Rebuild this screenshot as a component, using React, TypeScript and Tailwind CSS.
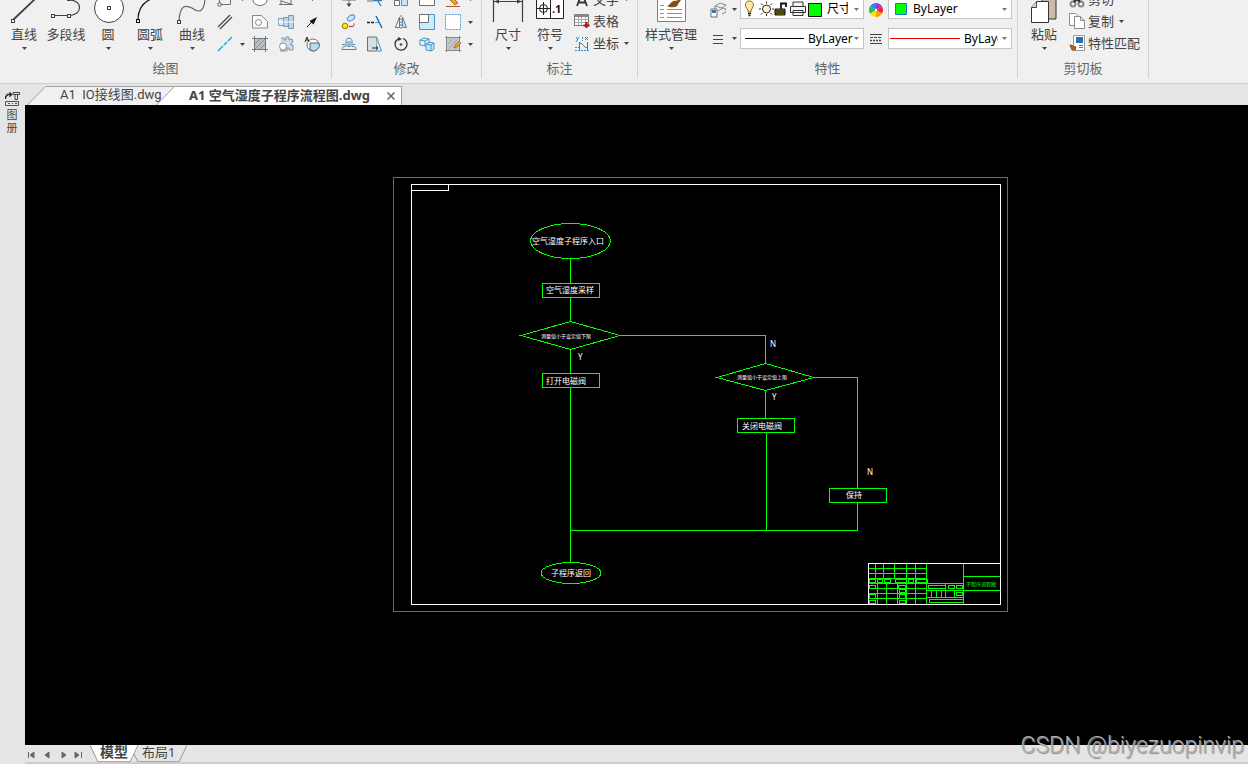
import { useState } from "react";
import type { ReactNode } from "react";

type IconProps = { children: ReactNode; short?: boolean };

// 16px toolbar icon; "short" keeps only the lower half for the scrolled row
function Icon({ children, short = false }: IconProps) {
  return (
    <svg
      viewBox={short ? "0 8 16 8" : "0 0 16 16"}
      className={short ? "w-4 h-2 block" : "w-4 h-4 block"}
      fill="none"
      stroke="#6b7075"
      strokeWidth="1"
      aria-hidden="true"
    >
      {children}
    </svg>
  );
}

function Caret({ light = false }: { light?: boolean }) {
  return (
    <svg viewBox="0 0 5 3" className="w-[5px] h-[3px] block" fill={light ? "#777" : "#444"} aria-hidden="true">
      <path d="M0 0h5L2.5 3z" />
    </svg>
  );
}

function IconButton({ label, children }: { label: string; children: ReactNode }) {
  return (
    <button type="button" aria-label={label} className="flex items-center justify-center">
      {children}
    </button>
  );
}

function BigButton({ label, caret = true, wide = false, children }: { label: string; caret?: boolean; wide?: boolean; children: ReactNode }) {
  return (
    <button type="button" className={`flex flex-col items-center ${wide ? "w-[66px]" : "w-[42px]"}`}>
      <svg viewBox="0 0 40 24" className="w-10 h-6 block" fill="none" stroke="#3d4045" aria-hidden="true">
        {children}
      </svg>
      <span className="text-[13px] leading-5 whitespace-nowrap">{label}</span>
      <span className="h-2 flex items-center">{caret && <Caret />}</span>
    </button>
  );
}

function Group({ title, className, inset = "", children }: { title: string; className: string; inset?: string; children: ReactNode }) {
  return (
    <section className={`flex flex-col border-r border-[#d2d2d2] mb-1 shrink-0 ${className}`}>
      <div className={`flex h-[58px] ${inset}`}>{children}</div>
      <h2 className="text-[13px] leading-5 text-center text-[#666]">{title}</h2>
    </section>
  );
}

function SmallButton({ label, caret = false, clipped = false, children }: { label: string; caret?: boolean; clipped?: boolean; children: ReactNode }) {
  return (
    <button
      type="button"
      className={`flex gap-[3px] overflow-hidden text-[13px] leading-[22px] whitespace-nowrap ${clipped ? "h-2.5 items-end" : "h-[22px] items-center"}`}
    >
      {clipped ? <span className="self-start">{children}</span> : children}
      <span>{label}</span>
      {caret && <span className={clipped ? "self-start pl-0.5 -mt-0.5" : "pl-0.5"}><Caret /></span>}
    </button>
  );
}

const HANDLE = { fill: "#f0f0f0", stroke: "#3d4045" };

function DrawGroup() {
  return (
    <Group title="绘图" className="w-[332px]" inset="pl-[3px]">
      <BigButton label="直线">
        <path d="M9 20L31-1" strokeWidth="1.8" />
        <rect x="7.5" y="19.5" width="3" height="3" {...HANDLE} />
      </BigButton>
      <BigButton label="多段线" caret={false}>
        <path d="M7 15.500h15c15 0 15-15 2-15.500" strokeWidth="1.200" />
        <rect x="5.500" y="14.500" width="3" height="3" {...HANDLE} />
        <rect x="21.500" y="14.500" width="3" height="3" {...HANDLE} />
        <rect x="21.500" y="-2.500" width="3" height="3" {...HANDLE} />
      </BigButton>
      <BigButton label="圆">
        <circle cx="21" cy="8" r="14.500" fill="#fff" />
        <rect x="19.500" y="6.500" width="3" height="3" {...HANDLE} />
      </BigButton>
      <BigButton label="圆弧">
        <path d="M8 20C8 11 12 3 21-1" stroke="#111" strokeWidth="1.300" />
        <rect x="6.500" y="19.500" width="3" height="3" {...HANDLE} stroke="#111" />
      </BigButton>
      <BigButton label="曲线">
        <path d="M7 21C8 4 14 5 20 8C28 14 32 11 33-1" strokeWidth="1.200" stroke="#666" />
        <rect x="5.500" y="20.500" width="3" height="3" {...HANDLE} />
      </BigButton>
      <div className="grid grid-cols-[16px_19px_26px_26px_16px] grid-rows-[8px_16px_16px] gap-y-1.5 justify-items-start pl-1">
        <IconButton label="矩形">
          <Icon short><path d="M2.500 6v6.500h11V6" /><path d="M1 11h3v3H1z" fill="#fff" /></Icon>
        </IconButton>
        <span className="justify-self-center -mt-0.5"><Caret /></span>
        <IconButton label="椭圆">
          <Icon short><ellipse cx="8" cy="8" rx="7" ry="5.500" fill="#fff" /></Icon>
        </IconButton>
        <IconButton label="多边形">
          <Icon short><path d="M3 6v7M13 6v7M1 12.500h14M3 9l10 3" /></Icon>
        </IconButton>
        <span className="w-4 flex justify-center -mt-0.5"><Caret /></span>

        <IconButton label="双线">
          <Icon><path d="M1 13L13 1M3 15L15 3" stroke="#44484c" strokeWidth="1.300" /></Icon>
        </IconButton>
        <span />
        <IconButton label="面域">
          <Icon><path d="M.500 1.500h9l6 6v6.500H.500z" fill="#fafafa" stroke="#85898d" /><circle cx="6.500" cy="8.500" r="3" stroke="#85898d" /></Icon>
        </IconButton>
        <IconButton label="轴">
          <Icon>
            <path d="M.5 4.500h5v7h-5z" fill="#d9eaf8" stroke="#7f98b0" />
            <path d="M5.500 3.500h5v9h-5zM10.500 1.500h5v13h-5z" fill="#b9d4ec" stroke="#7f98b0" />
            <path d="M0 8h16" stroke="#fff" />
          </Icon>
        </IconButton>
        <IconButton label="箭头">
          <Icon><path d="M3 13l5-5" stroke="#111" /><path d="M13 3L5.500 7l4 3.500z" fill="#111" stroke="none" /></Icon>
        </IconButton>

        <IconButton label="构造线">
          <Icon><path d="M1 15l5-5M7 9l3-3M11 5l4-4" stroke="#2ea3dc" strokeWidth="1.500" /></Icon>
        </IconButton>
        <span className="self-center justify-self-center"><Caret /></span>
        <IconButton label="填充">
          <Icon>
            <path d="M2.500 2.500h11v11h-11z" fill="#b9bec2" />
            <path d="M2.500 0v16M13.500 0v16M0 2.500h16M0 13.500h16" stroke="#74797d" />
            <path d="M3 8l5-5M3 13L13 3M8 13l5-5" stroke="#8a9095" />
          </Icon>
        </IconButton>
        <IconButton label="齿轮">
          <Icon>
            <path d="M3 2h3v2h2V1h3v3l3-1 1 3-2 1v2h2v5h-4v-2H9v3H2" fill="#cfdcea" stroke="#8492a3" />
            <circle cx="5" cy="10.500" r="3.500" fill="#fff" stroke="#8492a3" />
          </Icon>
        </IconButton>
        <IconButton label="局部视图">
          <Icon>
            <circle cx="9" cy="9" r="6" fill="#fff" />
            <path d="M6 7h9a6 6 0 0 1-9 7z" fill="#b5dcf5" stroke="#5f6468" />
            <path d="M1 6l2-5 2 5M2 4h2" stroke="#222" />
          </Icon>
        </IconButton>
      </div>
    </Group>
  );
}

function ModifyGroup() {
  return (
    <Group title="修改" className="w-[150px]" inset="pl-[9px]">
      <div className="grid grid-cols-[26px_26px_26px_26px_16px_19px] grid-rows-[8px_16px_16px] gap-y-1.5 justify-items-start">
        <IconButton label="移动">
          <Icon short><path d="M1 8h14M8 8v6" /><path d="M5.500 11.500h5L8 15z" fill="#444" stroke="none" /></Icon>
        </IconButton>
        <IconButton label="修剪">
          <Icon short><path d="M0 9h6" /><path d="M6 8.500h9M9 6l5 8" stroke="#2e7fc4" strokeWidth="1.300" /></Icon>
        </IconButton>
        <IconButton label="阵列">
          <Icon short><path d="M1.500 8.500h5v5h-5z" fill="#fff" /><path d="M8.500 4.500h6v9h-6z" fill="#c6e6fa" stroke="#4b94ca" /></Icon>
        </IconButton>
        <IconButton label="拉伸">
          <Icon short><path d="M.500 2.500h15v11H.500z" fill="#fff" /></Icon>
        </IconButton>
        <IconButton label="删除">
          <Icon short><path d="M4 7l6 6 3-2-7-7z" fill="#f0a02e" stroke="#b86a16" /><path d="M1 14.500h14" stroke="#a05c2c" /></Icon>
        </IconButton>
        <span className="justify-self-center -mt-0.5"><Caret /></span>

        <IconButton label="复制对象">
          <Icon>
            <circle cx="4" cy="12" r="2.800" fill="#ffe800" stroke="#8f7f00" />
            <ellipse cx="10" cy="4" rx="4" ry="2.500" transform="rotate(-30 10 4)" fill="#c6e6fa" stroke="#4b94ca" />
            <path d="M8 12.500h3c2 0 2-1 2-3" stroke="#a33" />
          </Icon>
        </IconButton>
        <IconButton label="延伸">
          <Icon><path d="M0 8.500h3M4 8.500h3" stroke="#222" strokeWidth="1.300" /><path d="M8 8.500h4" stroke="#2e9be0" /><path d="M9 2l6 12" stroke="#1c62b8" strokeWidth="1.400" /></Icon>
        </IconButton>
        <IconButton label="镜像">
          <Icon><path d="M6.500 3v10.500h-4z" fill="#fff" /><path d="M9.500 3v10.500h4z" fill="#b5dcf5" stroke="#5f87a8" /><path d="M8 1v14" strokeDasharray="2 1" /></Icon>
        </IconButton>
        <IconButton label="缩放">
          <Icon><path d="M.5.5h15v15H.5z" fill="#cdebfb" stroke="#4b94ca" /><path d="M.5.500h9v8h-9z" fill="#fff" /></Icon>
        </IconButton>
        <IconButton label="选择区域">
          <Icon><path d="M.5.500h15v15H.5z" fill="#fff" stroke="#4b9bd4" strokeDasharray="2 1" /></Icon>
        </IconButton>
        <span className="self-center justify-self-center"><Caret /></span>

        <IconButton label="偏移">
          <Icon><path d="M1 13.500h14c0-3-2-3-4-3V4.500c0-3-6-3-6 0v6c-2 0-4 0-4 3z" fill="#e5f3fb" stroke="#557f9e" /><path d="M1 8.500h3M12 8.500h2M7 5v5.500h2V5" stroke="#557f9e" /></Icon>
        </IconButton>
        <IconButton label="倾斜">
          <Icon><path d="M.5 1h9v14h-9z" fill="#d8dde0" /><path d="M9.500 1l5 14h-5" fill="#cdebfb" stroke="#4b94ca" /><path d="M5 12h6M9 10l2 2-2 2" stroke="#333" /></Icon>
        </IconButton>
        <IconButton label="旋转">
          <Icon><path d="M10 2.500A6 6 0 1 1 5 3" stroke="#333" strokeWidth="1.300" /><path d="M5 1l4 2-4 2z" fill="#333" stroke="none" /><circle cx="8" cy="8.500" r="1" fill="#333" /></Icon>
        </IconButton>
        <IconButton label="分解">
          <Icon>
            <path d="M1 4l4-2 5 1v5l-4 2-5-1zM6 5v5M1 4l5 1 4-2" fill="#e5f6fd" stroke="#4b94ca" />
            <path d="M7 8l3-2 5 1v6l-3 2-5-1zM12 9v6M7 8l5 1 3-2" fill="#c6e6fa" stroke="#4b94ca" />
          </Icon>
        </IconButton>
        <IconButton label="编辑填充">
          <Icon>
            <path d="M2 2h12v12H2z" fill="#c4c7ca" stroke="none" />
            <path d="M1.500 0v16M14.500 0v16M0 1.500h16M0 14.500h16" stroke="#888" />
            <path d="M3 8l5-5M3 13L13 3" stroke="#a5a8ab" />
            <path d="M9 12l1-3 4-4 2 2-4 4z" fill="#f0a02e" stroke="#a5601a" strokeWidth="0.700" />
          </Icon>
        </IconButton>
        <span className="self-center justify-self-center"><Caret /></span>
      </div>
    </Group>
  );
}

function AnnotateGroup() {
  return (
    <Group title="标注" className="w-[156px]" inset="pl-[5px]">
      <BigButton label="尺寸">
        <path d="M5.500 0v22M34.500 0v22M6 1.500h28" strokeWidth="1.200" />
        <path d="M6 1.500l5-2v4zM34 1.500l-5-2v4z" fill="#3d4045" stroke="none" />
      </BigButton>
      <BigButton label="符号">
        <path d="M6.500-1v19.500h27V-1M20.500-1v20" fill="#fff" stroke="#222" />
        <circle cx="13.500" cy="8.500" r="4" stroke="#222" />
        <path d="M7 8.500h13M13.500 2v13" stroke="#222" />
        <text x="22" y="13" fontSize="11" fontWeight="700" fill="#111" stroke="none">.1</text>
      </BigButton>
      <div className="flex flex-col pl-[3px]">
        <SmallButton label="文字" caret clipped>
          <Icon short><path d="M3 14l5-13 5 13M5 10.500h6" stroke="#333" strokeWidth="1.800" /></Icon>
        </SmallButton>
        <SmallButton label="表格">
          <Icon>
            <path d="M.5 1.500h14v11H.5z" fill="#fff" stroke="#777" />
            <path d="M.5 2.500h14" stroke="#888" strokeWidth="3" />
            <path d="M1 6.500h13M1 9.500h13M4.500 4v8M7.500 4v8M11.500 4v8" stroke="#aaa" />
            <path d="M12.500 9v6M9.500 12.500h6" stroke="#c40000" strokeWidth="2" />
          </Icon>
        </SmallButton>
        <SmallButton label="坐标" caret>
          <Icon>
            <path d="M2 2l2 3M5 2L2 7M11 2l3 3M14 2l-3 3" stroke="#3b8cc8" />
            <path d="M5.500 7v8M13.500 7v8M5.500 8c4 0 4 5 8 5" />
            <path d="M1 12.500h4M8.500 2v4M1 15.500h14" strokeDasharray="2 1" stroke="#3b8cc8" />
          </Icon>
        </SmallButton>
      </div>
    </Group>
  );
}

function LayerIcons() {
  return (
    <svg viewBox="0 0 80 18" className="w-20 h-[18px] block ml-0.5 shrink-0" fill="none" stroke="#222" aria-hidden="true">
      <path d="M5 10C0 5 3 1 6.500 1s6 4 1.500 9v2H5z" fill="#ffe9a0" stroke="#8a6c20" />
      <path d="M5 13.500h3M5.500 15.500h2" strokeWidth="1.500" />
      <circle cx="23.500" cy="9" r="4" fill="#fff6d5" />
      <path d="M23.500 1.500v2M23.500 14v2M16 9h2M29 9h2M18 3.500l1.500 1.500M27.500 13l1.500 1.500M29 3.500L27.500 5M19.500 13L18 14.500" />
      <path d="M32 9h10v6H32z" fill="#8a8400" stroke="#111" />
      <path d="M32 11h10M32 13h10" stroke="#111" />
      <path d="M38 9V3.500h5V7" stroke="#111" strokeWidth="1.800" />
      <path d="M50 6V2h10v4M47.500 6.500h15v6h-15zM50 10.500h10v5H50z" fill="#f5f5f5" stroke="#333" />
      <path d="M65.500 3.500h13v13h-13z" fill="#00ff00" stroke="#111" />
    </svg>
  );
}

const COMBO = "flex items-center bg-white border border-[#c4c4c4] overflow-hidden text-[12px] text-black";

function PropertiesGroup() {
  const [layer, setLayer] = useState("尺寸线");
  const [color, setColor] = useState("ByLayer");
  const [linetype, setLinetype] = useState("ByLayer");
  const [lineweight, setLineweight] = useState("ByLayer");
  return (
    <Group title="特性" className="w-[380px]">
      <BigButton label="样式管理" wide>
        <path d="M6.500-1v22.500h28V-1" fill="#fff" stroke="#6883a8" />
        <path d="M9 5.500h4M9 9.500h4M9 13.500h4M9 17.500h4M16 9.500h15M16 13.500h15M16 17.500h15" stroke="#7f93b5" />
        <path d="M16 6c4-1 4-6 9-5l3-2 2 1-3 4c0 4-8 4-11 2z" fill="#8b4d16" stroke="none" />
      </BigButton>
      <div className="grid grid-cols-[23px_11px_124px_24px_124px] grid-rows-[19px_21px] gap-y-[9px] items-center pl-0.5">
        <IconButton label="图层">
          <Icon>
            <path d="M1 7h6v8H1z" fill="#fff" /><path d="M2 8h4v3H2z" fill="#3979b4" stroke="none" />
            <path d="M5 4l5-3 6 2-4 3zM8 9l5-3 3 1v3l-4 2M5 4v3" fill="#eee" stroke="#858b90" />
          </Icon>
        </IconButton>
        <span className="flex justify-center"><Caret /></span>
        <label className={`${COMBO} h-[19px] border-t-0`}>
          <LayerIcons />
          <select aria-label="图层" value={layer} onChange={(e) => setLayer(e.target.value)} className="appearance-none flex-1 min-w-0 ml-1 mr-1.5 text-[12px] overflow-hidden text-clip">
            <option>尺寸线</option>
          </select>
          <span className="mr-1"><Caret light /></span>
        </label>
        <IconButton label="颜色">
          <svg viewBox="-7 -7 14 14" className="w-3.5 h-3.5 block" aria-hidden="true">
            <path d="M0 0L0-7A7 7 0 0 1 6-3.500z" fill="#9b35d0" />
            <path d="M0 0L6-3.500A7 7 0 0 1 6 3.500z" fill="#ee2233" />
            <path d="M0 0L6 3.500A7 7 0 0 1 0 7z" fill="#ff9c00" />
            <path d="M0 0L0 7A7 7 0 0 1-6 3.500z" fill="#ffe100" />
            <path d="M0 0L-6 3.500A7 7 0 0 1-6-3.500z" fill="#29b84a" />
            <path d="M0 0L-6-3.500A7 7 0 0 1 0-7z" fill="#2f86ef" />
            <circle r="1.200" fill="#fff" />
          </svg>
        </IconButton>
        <label className={`${COMBO} h-[19px] border-t-0`}>
          <svg viewBox="0 0 12 12" className="w-3 h-3 block ml-1.5 shrink-0" aria-hidden="true">
            <path d="M.500.500h11v11H.500z" fill="#00ff00" stroke="#1976d2" />
          </svg>
          <select aria-label="颜色" value={color} onChange={(e) => setColor(e.target.value)} className="appearance-none flex-1 min-w-0 ml-1.5 text-[12px]">
            <option>ByLayer</option>
          </select>
          <span className="mr-1"><Caret light /></span>
        </label>

        <IconButton label="线型">
          <Icon><path d="M3 4.500h10M3 8.500h10M3 12.500h10" stroke="#444" /></Icon>
        </IconButton>
        <span className="flex justify-center"><Caret /></span>
        <label className={`${COMBO} h-[21px]`}>
          <span className="w-[59px] h-px bg-black ml-1 mr-1 shrink-0" />
          <select aria-label="线型" value={linetype} onChange={(e) => setLinetype(e.target.value)} className="appearance-none flex-1 min-w-0 text-[12px]">
            <option>ByLayer</option>
          </select>
          <span className="mr-1"><Caret light /></span>
        </label>
        <IconButton label="线宽">
          <Icon>
            <path d="M2 3.500h12M2 12.500h12" stroke="#444" />
            <path d="M2 6.500h12" stroke="#444" strokeDasharray="3 1" />
            <path d="M2 9.500h12" stroke="#444" strokeWidth="1.500" strokeDasharray="2 1" />
          </Icon>
        </IconButton>
        <label className={`${COMBO} h-[21px]`}>
          <span className="w-[70px] h-px bg-[#e80000] ml-px mr-1 shrink-0" />
          <select aria-label="线宽" value={lineweight} onChange={(e) => setLineweight(e.target.value)} className="appearance-none flex-1 min-w-0 mr-1 text-[12px] overflow-hidden text-clip">
            <option>ByLayer</option>
          </select>
          <span className="mr-1"><Caret light /></span>
        </label>
      </div>
    </Group>
  );
}

function ClipboardGroup() {
  return (
    <Group title="剪切板" className="w-[131px]" inset="pl-[5px]">
      <BigButton label="粘贴">
        <path d="M18-1h14v20H18z" fill="#c9bba8" stroke="#333" />
        <path d="M7.500 7.500l5-6h12v21h-17z" fill="#fff" stroke="#333" />
        <path d="M7.500 7.500h5v-6" fill="#ddd" />
      </BigButton>
      <div className="flex flex-col pl-1">
        <SmallButton label="剪切" clipped>
          <Icon short>
            <circle cx="4" cy="12" r="2.500" strokeWidth="2" stroke="#8a8a8a" /><circle cx="12" cy="12" r="2.500" strokeWidth="2" stroke="#8a8a8a" />
            <path d="M5 10l5-6M11 10L6 4" stroke="#333" strokeWidth="2.500" />
          </Icon>
        </SmallButton>
        <SmallButton label="复制" caret>
          <Icon>
            <path d="M.5.5h6l3 3v9h-9z" fill="#fff" stroke="#8a8e92" />
            <path d="M5.500 3.500h6l4 4v8h-10zM11.500 3.500v4h4" fill="#fff" stroke="#8a8e92" />
          </Icon>
        </SmallButton>
        <SmallButton label="特性匹配">
          <Icon>
            <path d="M4.500.5h11v15h-11z" fill="#fff" stroke="#999" />
            <path d="M7 2h7v6H7z" fill="#2e6ea8" stroke="none" />
            <path d="M10 10.500h4M10 12.500h4" />
            <path d="M1 10l3 1 3 1-1 3H3z" fill="#b06a1c" stroke="#8a4a10" />
          </Icon>
        </SmallButton>
      </div>
    </Group>
  );
}

function DocumentTabs() {
  return (
    <nav aria-label="图纸" className="flex items-end h-[22px] bg-[#e5e5e5] border-t border-[#d0d0d0] text-[13px] leading-4 text-[#444] whitespace-nowrap">
      <a href="#io" className="flex ml-0.5">
        <svg viewBox="0 0 19 19" className="w-[19px] h-[19px] block" fill="#f0f0f0" stroke="#a0a0a0" aria-hidden="true">
          <path d="M0 19.500L18.500.500h2v20" />
        </svg>
        <span className="h-[19px] border-t border-[#a0a0a0] bg-[#f0f0f0] pl-3.5 w-[129px] whitespace-pre font-['Roboto','Noto_Sans_CJK_SC',sans-serif]">A1  IO接线图.dwg</span>
      </a>
      <div className="flex -ml-[19px]">
        <svg viewBox="0 0 19 19" className="w-[19px] h-[19px] block" fill="#fff" stroke="#a0a0a0" aria-hidden="true">
          <path d="M0 19.500L18.500.500h2v20" />
        </svg>
        <a href="#humidity" aria-current="page" className="h-[19px] border-t border-[#a0a0a0] bg-white pl-3.5 w-[206px] font-bold">
          A1 空气湿度子程序流程图.dwg
        </a>
        <button type="button" aria-label="关闭" className="h-[19px] w-[21px] pl-1.5 bg-white border-t border-r border-[#a0a0a0]">
          <svg viewBox="0 0 8 8" className="w-2 h-2 block" stroke="#666" strokeWidth="1.500" aria-hidden="true">
            <path d="M.500.500l7 7M7.500.500l-7 7" />
          </svg>
        </button>
      </div>
    </nav>
  );
}

type Shape = { x: number; y: number; text: string; size: number };

const BOXES = [
  { x: 542, y: 283 },
  { x: 542, y: 373 },
  { x: 737, y: 418 },
  { x: 829, y: 488 },
];

const LINES = [
  "M570.5 258V283",
  "M570.5 297V321",
  "M570.5 349V373",
  "M570.5 387V562",
  "M621 335.5H765.5V363",
  "M765.5 390V418",
  "M766.5 432V530",
  "M815 377.5H857.5V488",
  "M857.5 502V530.5H570",
];

const LABELS: Shape[] = [
  { x: 532, y: 244, text: "空气湿度子程序入口", size: 8 },
  { x: 546, y: 293, text: "空气湿度采样", size: 8 },
  { x: 541, y: 338, text: "测量值小于设定值下限", size: 5 },
  { x: 578, y: 360, text: "Y", size: 8 },
  { x: 546, y: 384, text: "打开电磁阀", size: 8 },
  { x: 770, y: 347, text: "N", size: 8 },
  { x: 737, y: 379, text: "测量值小于设定值上限", size: 5 },
  { x: 772, y: 400, text: "Y", size: 8 },
  { x: 742, y: 429, text: "关闭电磁阀", size: 8 },
  { x: 867, y: 475, text: "N", size: 8 },
  { x: 846, y: 498, text: "保持", size: 8 },
  { x: 551, y: 576, text: "子程序返回", size: 8 },
];

function Drawing() {
  return (
    <svg viewBox="25 105 1223 640" className="w-full h-full block" fill="none" role="img" aria-label="空气湿度子程序流程图">
      <g shapeRendering="crispEdges">
        <rect x="393.5" y="177.5" width="614" height="434" stroke="#ff00ff" />
        <rect x="411.5" y="184.5" width="589" height="420" stroke="#fff" />
        <rect x="411.5" y="184.5" width="37" height="6" stroke="#fff" />
      </g>
      <g stroke="#00ff00" shapeRendering="crispEdges">
        <ellipse cx="570.5" cy="241" rx="40" ry="17.500" />
        <ellipse cx="571" cy="573" rx="30" ry="10.500" />
        <path d="M521 335.500L570.500 321.500L620 335.500L570.500 349.500z" />
        <path d="M717 377.500L765.500 363.500L814 377.500L765.500 390.500z" />
        {BOXES.map((b) => (
          <rect key={`${b.x}-${b.y}`} x={b.x + 0.5} y={b.y + 0.5} width="57" height="14" />
        ))}
        {LINES.map((d) => (
          <path key={d} d={d} />
        ))}
      </g>
      <g fill="#fff">
        {LABELS.map((l) => (
          <text key={`${l.x}-${l.y}`} x={l.x} y={l.y} fontSize={l.size}>
            {l.text}
          </text>
        ))}
      </g>
      <TitleBlock />
    </svg>
  );
}

function TitleBlock() {
  return (
    <g shapeRendering="crispEdges">
      <g stroke="#00ff00">
        <path d="M868 568.500h58M868 573.500h58M868 578.500h58M868 583.500h58M868 588.500h58M868 593.500h58M868 598.500h58" />
        <path d="M875.500 563v16M883.500 563v16M894.500 563v16M906.500 563v41M915.500 563v41M926.500 563v41" />
        <path d="M877.500 583v21M886.500 583v21M897.500 583v21" />
        <path d="M869.500 579.500h6v3h-6zM877.500 579.500h5v3h-5zM884.500 579.500h6v3h-6zM895.500 579.500h11v3h-11zM908.500 579.500h5v3h-5zM916.500 579.500h11v3h-11z" />
        <path d="M869.500 585.500h6v3h-6zM869.500 594.500h6v4h-6zM869.500 600.500h6v3h-6zM898.500 585.500h7v3h-7zM899.500 589.500h6v3h-6zM899.500 594.500h6v4h-6zM899.500 600.500h6v3h-6z" />
        <path d="M926 583.500h37M926 590.500h37M926 597.500h37M963.500 563v41M963 576.500h37M963 590.500h37" />
        <path d="M928.500 585.500h17v3h-17zM948.500 585.500h6v3h-6zM956.500 585.500h6v3h-6zM956.500 592.500h6v3h-6zM929.500 599.500h34v3h-34z" />
        <path d="M931.500 590v7M936.500 590v7M941.500 590v7M945.500 583v14M954.500 590v7" />
      </g>
      <path d="M868.500 604V563.500H1000" stroke="#fff" />
      <text x="966" y="586" fontSize="5" fill="#00ff00">
        子程序流程图
      </text>
    </g>
  );
}

const NAV = [
  { label: "第一个", d: "M1.500 1v6M7 1L3 4l4 3z" },
  { label: "上一个", d: "M6 1L2 4l4 3z" },
  { label: "下一个", d: "M3 1l4 3-4 3z" },
  { label: "最后一个", d: "M1 1l4 3-4 3zM7.500 1v6" },
];

function LayoutTabs() {
  return (
    <footer className="flex items-start h-[19px] bg-[#e5e5e5] border-b-2 border-[#cdcdcd] text-[14px] leading-4 text-[#444]">
      <div className="flex w-[65px] pt-1.5 pl-0.5">
        {NAV.map((n) => (
          <button key={n.label} type="button" aria-label={n.label} className="w-4 h-2">
            <svg viewBox="0 0 8 8" className="w-2 h-2 block" fill="#666" stroke="#666" strokeWidth="1" aria-hidden="true">
              <path d={n.d} />
            </svg>
          </button>
        ))}
      </div>
      <button type="button" className="flex font-bold whitespace-nowrap leading-[14px]">
        <svg viewBox="0 0 8 17" className="w-2 h-[17px] block" aria-hidden="true">
          <path d="M0 0h8v17z" fill="#fff" />
          <path d="M0 0l8 17" stroke="#999" />
        </svg>
        <span className="bg-white border-b border-[#aaa] h-[17px] px-0.5">模型</span>
        <svg viewBox="0 0 8 17" className="w-2 h-[17px] block" aria-hidden="true">
          <path d="M0 0h8L0 17z" fill="#fff" />
          <path d="M8 0L0 17M4 9l4 8" stroke="#999" fill="none" />
        </svg>
      </button>
      <button type="button" className="flex whitespace-nowrap leading-[14px]">
        <span className="border-b border-[#aaa] h-[17px] px-1 text-[13px]">布局1</span>
        <svg viewBox="0 0 8 17" className="w-2 h-[17px] block" aria-hidden="true">
          <path d="M8 0L0 17" stroke="#999" fill="none" />
        </svg>
      </button>
    </footer>
  );
}

export default function App() {
  return (
    <div className="relative h-screen overflow-hidden flex flex-col bg-[#f0f0f0] text-[#444] font-['Noto_Sans','Noto_Sans_CJK_SC',sans-serif]">
      <header className="flex h-[82px] shrink-0 overflow-hidden">
        <DrawGroup />
        <ModifyGroup />
        <AnnotateGroup />
        <PropertiesGroup />
        <ClipboardGroup />
      </header>
      <div className="flex flex-1 min-h-0 pt-px">
        <aside className="w-[25px] shrink-0 bg-[#e5e5e5] border-t border-[#d0d0d0] pt-[7px]">
          <button type="button" className="flex flex-col items-center w-6 text-[11px] leading-[13px]">
            <svg viewBox="0 0 15 17" className="w-[15px] h-[17px] block" fill="none" stroke="#222" aria-hidden="true">
              <path d="M.500 8V6l2-2.500h3" strokeWidth="1.500" />
              <path d="M4.500.500v6l3-3z" fill="#222" stroke="none" />
              <path d="M8 1.500h6.500v2H8zM10 3.500v5h2.500v-5" stroke="#444" />
              <path d="M.5 10.500h13v4H.500zM3 12.500h2M7 12.500h1M10 12.500h2" stroke="#555" />
            </svg>
            <span className="font-['Noto_Sans_CJK_SC',sans-serif]">图</span>
            <span className="font-['Noto_Sans_CJK_SC',sans-serif]">册</span>
          </button>
        </aside>
        <main className="flex flex-col flex-1 min-w-0">
          <DocumentTabs />
          <div className="flex-1 min-h-0 bg-black">
            <Drawing />
          </div>
          <LayoutTabs />
        </main>
      </div>
      <p className="absolute right-1 bottom-1 text-[23px] leading-7 font-light font-['Roboto',sans-serif] text-[#adadad] [text-shadow:1px_1px_1px_#8a8a8a]">
        CSDN @biyezuopinvip
      </p>
    </div>
  );
}
